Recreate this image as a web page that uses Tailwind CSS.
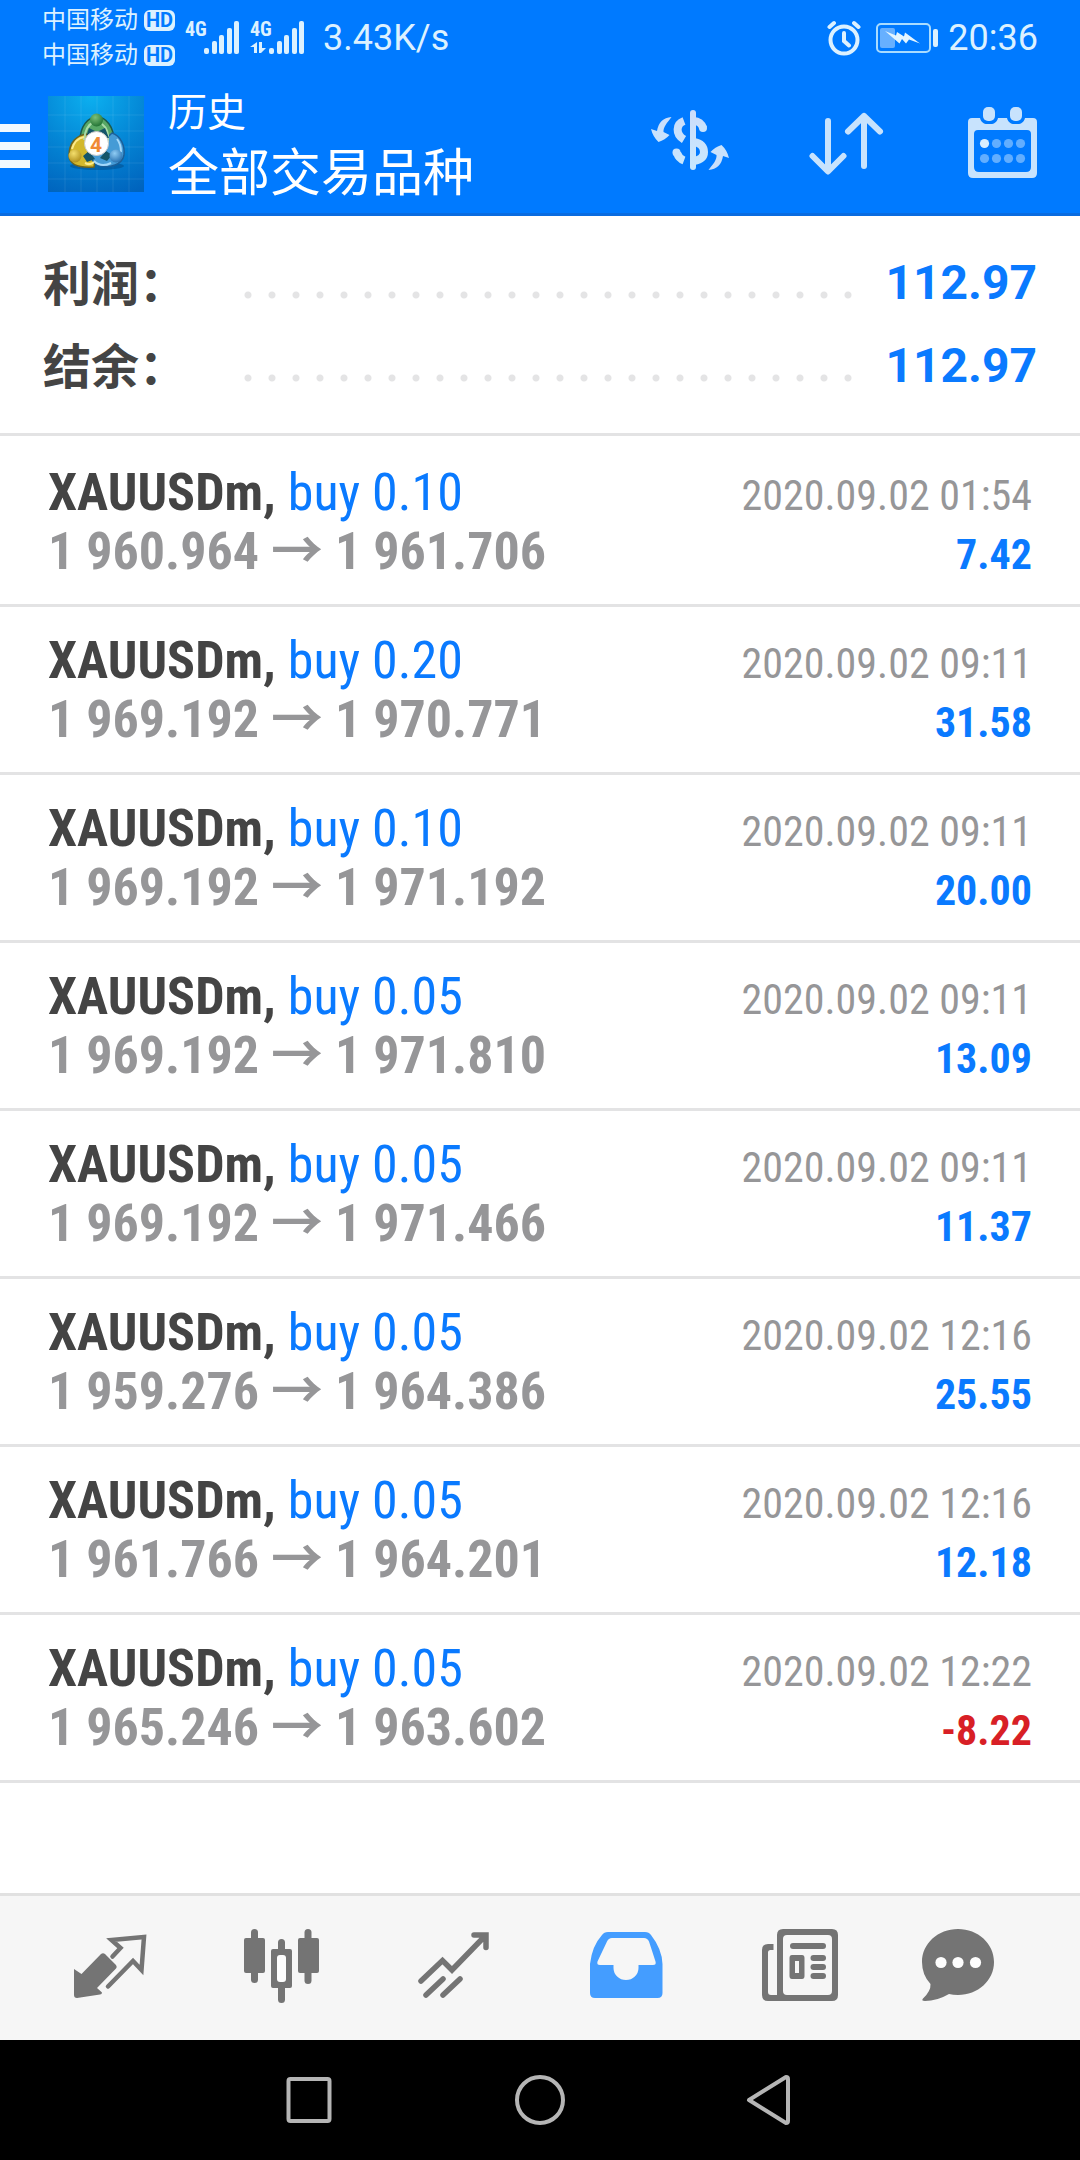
<!DOCTYPE html>
<html lang="zh-CN">
<head>
<meta charset="utf-8">
<meta name="viewport" content="width=device-width, initial-scale=1">
<title>历史</title>
<script src="https://cdn.jsdelivr.net/npm/@tailwindcss/browser@4"></script>
</head>
<body class="flex min-h-screen flex-col bg-white font-['Roboto','Noto_Sans_CJK_SC',sans-serif] text-[#444]">

<header class="bg-[#007aff] text-white border-b-3 border-[#0a6ce0]">
  <!-- status bar -->
  <div class="flex h-[75px] items-center pl-[42px] pr-[42px] text-[#dcf1ff]">
    <div class="flex flex-col text-2xl leading-[35px]">
      <div class="flex items-center gap-[6px]">中国移动
        <span class="flex h-[21px] w-[31px] items-center justify-center rounded-md bg-[#dcf1ff] text-xl leading-none font-bold text-[#007aff]">HD</span>
      </div>
      <div class="flex items-center gap-[6px]">中国移动
        <span class="flex h-[21px] w-[31px] items-center justify-center rounded-md bg-[#dcf1ff] text-xl leading-none font-bold text-[#007aff]">HD</span>
      </div>
    </div>
    <svg class="ml-[10px] h-12 w-[120px]" viewBox="0 -5 120 48" fill="#dcf1ff">
      <text x="0" y="17" font-family="Roboto Condensed" font-weight="700" font-size="20">4G</text>
      <g id="bars"><rect x="19" y="29" width="5" height="6" rx="2"/><rect x="27" y="22" width="5" height="13" rx="2"/><rect x="34" y="16" width="5" height="19" rx="2"/><rect x="42" y="9" width="5" height="26" rx="2"/><rect x="49" y="2" width="5" height="33" rx="2"/></g>
      <text x="65" y="17" font-family="Roboto Condensed" font-weight="700" font-size="20">4G</text>
      <path d="M72 23v11h-3v-6h-4zM74 23h3v6h4l-5 5h-2z"/>
      <use href="#bars" x="65"/>
    </svg>
    <span class="ml-[18px] text-4xl leading-[50px]">3.43K/s</span>
    <svg class="ml-auto h-[36px] w-[34px]" viewBox="0 0 34 36" fill="none" stroke="#dcf1ff" stroke-width="4" stroke-linecap="round">
      <circle cx="17" cy="20" r="13.5"/><path d="M17 13v8l5 4.500M2.500 7l4.500-4M31.500 7l-4.500-4"/>
    </svg>
    <svg class="ml-[14px] h-[30px] w-[64px]" viewBox="0 0 64 30">
      <rect x="2" y="1" width="53" height="28" rx="4" fill="none" stroke="#a9dcff" stroke-width="2"/>
      <rect x="5" y="5" width="15" height="20" rx="2" fill="#67b0ff"/>
      <path d="M10 8L21 12.500 22 9 29 13.500 30 9.500 45 20.500 34 16.500 31 20.500 27 16 24.500 20.500z" fill="#e4f5ff"/>
      <rect x="58" y="6" width="5" height="18" rx="2" fill="#dcf1ff"/>
    </svg>
    <span class="ml-[9px] text-4xl leading-[50px]">20:36</span>
  </div>

  <!-- app bar -->
  <div class="flex h-[138px] items-center">
    <button type="button" aria-label="菜单" class="mr-[18px] flex w-[30px] flex-col gap-[10px] pt-1">
      <span class="h-2 bg-[#f2f9ff]"></span><span class="h-2 bg-[#f2f9ff]"></span><span class="h-2 bg-[#f2f9ff]"></span>
    </button>
    <svg class="size-24 shrink-0" viewBox="0 0 96 96">
      <defs>
        <radialGradient id="sky" cx=".45" cy="0" r="1.100"><stop offset="0" stop-color="#0cb0f0"/><stop offset=".5" stop-color="#0487d6"/><stop offset="1" stop-color="#0063bd"/></radialGradient>
        <radialGradient id="gr" cx=".4" cy=".3" r=".8"><stop offset="0" stop-color="#7cc078"/><stop offset="1" stop-color="#17692c"/></radialGradient>
        <radialGradient id="ye" cx=".4" cy=".3" r=".8"><stop offset="0" stop-color="#f3de6c"/><stop offset="1" stop-color="#a88612"/></radialGradient>
        <radialGradient id="bl" cx=".4" cy=".3" r=".8"><stop offset="0" stop-color="#8fccf4"/><stop offset="1" stop-color="#1c66a8"/></radialGradient>
      </defs>
      <rect width="96" height="96" fill="url(#sky)"/>
      <path d="M17 0v96M33 0v96M49 0v96M65 0v96M81 0v96M0 19h96M0 35h96M0 51h96M0 67h96M0 83h96" stroke="#fff" stroke-opacity=".09"/>
      <ellipse cx="49" cy="70" rx="27" ry="4" fill="#024a86" opacity=".5"/>
      <g stroke="#1d5a4a" stroke-width="1.500">
        <path d="M32 45c0-15 8-24 17-24s17 10 17 24l-8 7H40z" fill="#58a866"/>
        <path d="M21 60c0-14 8-21 18-22l9 22-2 11c-14 1-24-1-25-11z" fill="#d3b82c" stroke="#6d6420"/>
        <path d="M64 37c9 3 13 13 12 22-2 10-14 13-24 11-5-1-9-6-10-12z" fill="#459bd6" stroke="#1c5f99"/>
      </g>
      <path d="M36 44c1-10 5-16 10-18M60 46c1-9-2-15-6-18" stroke="#a9dba9" stroke-width="2" fill="none"/>
      <path d="M24 53c2-7 6-11 12-12M37 67c4 2 7 1 9-1" stroke="#fbea8c" stroke-width="2" fill="none"/>
      <path d="M69 43c4 5 4 9 4 13M46 65c5 5 11 5 17 2" stroke="#a4d8fa" stroke-width="2" fill="none"/>
      <path d="M41 32l8 4 8-4 4 10H38zM35 60l6-5 6 8-8 3zM52 62l6-7 6 4-5 6z" fill="#14556a"/>
      <circle cx="48.500" cy="24" r="6.500" fill="url(#gr)"/>
      <circle cx="27" cy="60" r="6.500" fill="url(#ye)"/>
      <circle cx="68" cy="60" r="6.500" fill="url(#bl)"/>
      <circle cx="48.500" cy="47.500" r="12" fill="#fff" stroke="#c9c9c9"/>
      <text x="48" y="55.500" text-anchor="middle" font-family="Roboto" font-weight="700" font-size="21" fill="#f08a35">4</text>
    </svg>
    <div class="ml-6 mr-auto pt-2">
      <div class="text-[39px] leading-[52px]">历史</div>
      <h1 class="text-[51px] leading-[70px]">全部交易品种</h1>
    </div>
    <button type="button" aria-label="品种" class="flex w-[156px] justify-center">
      <svg class="h-[76px] w-[84px]" viewBox="0 0 84 76">
        <defs><linearGradient id="ice" gradientUnits="userSpaceOnUse" x1="0" y1="0" x2="0" y2="76"><stop offset="0" stop-color="#ccdcfa"/><stop offset="1" stop-color="#c6ebff"/></linearGradient></defs>
        <g fill="none" stroke="url(#ice)" stroke-width="8">
          <path d="M36 15C28 18 27 28 36 33.500"/>
          <path d="M29 47c1 3 3 6 7 7.500"/><circle cx="28.500" cy="46.500" r="4" stroke="none" fill="#c8e3fd"/>
          <path d="M46 15c4 0 8 3 9 7"/><circle cx="55" cy="22" r="4" stroke="none" fill="#c8e3fd"/>
          <path d="M46 36c7 1 10 5 10 10s-4 8-10 9"/>
        </g>
        <rect x="42" y="4" width="6" height="60" rx="3" fill="url(#ice)"/>
        <path id="turn" d="M23.500 11C19 17 15 21 15.500 26L21.500 29Q17 34 10.500 36Q5 31 3 23L9 25Q11 12 23.500 11z" fill="url(#ice)"/>
        <use href="#turn" transform="rotate(180 42 37.500)"/>
      </svg>
    </button>
    <button type="button" aria-label="排序" class="flex w-[156px] justify-center">
      <svg class="h-[68px] w-[76px]" viewBox="0 0 76 68" fill="none" stroke="#c8e3fd" stroke-width="6" stroke-linecap="round" stroke-linejoin="round">
        <path d="M20 11v50M4.500 46L20 61.500 35.500 46M56 56V6M40 21.500L56 6l16 15.500"/>
      </svg>
    </button>
    <button type="button" aria-label="日期" class="flex w-[156px] justify-center">
      <svg class="h-[74px] w-[69px]" viewBox="0 0 69 74" fill="#c8e3fd">
        <path fill-rule="evenodd" d="M4 11H12C13 15 16 17 19 17H23C26 17 29 15 30 11H39C40 15 43 17 46 17H50C53 17 56 15 57 11H65Q69 11 69 15V66Q69 71 64 71H5Q0 71 0 66V15Q0 11 4 11zM10 23Q6 23 6 27V60Q6 65 11 65H58Q63 65 63 60V27Q63 23 59 23z"/>
        <rect x="15" y="0" width="12" height="14" rx="5"/><rect x="42" y="0" width="12" height="14" rx="5"/>
        <circle cx="16.500" cy="36.500" r="4.600" fill="#d8eeff"/>
        <g fill="#62aeff"><circle cx="28.500" cy="36.500" r="4.600"/><circle cx="40.500" cy="36.500" r="4.600"/><circle cx="52.500" cy="36.500" r="4.600"/><circle cx="16.500" cy="51.500" r="4.600"/><circle cx="28.500" cy="51.500" r="4.600"/><circle cx="40.500" cy="51.500" r="4.600"/><circle cx="52.500" cy="51.500" r="4.600"/></g>
      </svg>
    </button>
  </div>
</header>

<main class="flex-1">
  <dl class="border-b-3 border-[#e3e3e4] px-[43px] pt-[25px] pb-[26px] text-5xl leading-[83px] font-bold">
    <div class="flex items-center">
      <dt class="w-[193px] pt-1 leading-[79px]">利润：</dt>
      <dd class="flex flex-1 items-center text-[#0a7aff]">
        <span class="mt-6 mr-[25px] h-2 flex-1 bg-[radial-gradient(circle,#e4e4e5_3px,transparent_4px)] bg-size-[24px_8px]"></span>112.97</dd>
    </div>
    <div class="flex items-center">
      <dt class="w-[193px] pt-1 leading-[79px]">结余：</dt>
      <dd class="flex flex-1 items-center text-[#0a7aff]">
        <span class="mt-6 mr-[25px] h-2 flex-1 bg-[radial-gradient(circle,#e4e4e5_3px,transparent_4px)] bg-size-[24px_8px]"></span>112.97</dd>
    </div>
  </dl>

  <ul class="pt-[3px] font-['Roboto_Condensed','Noto_Sans_CJK_SC',sans-serif] text-[52px] leading-[59px]">
    <li class="border-b-3 border-[#e3e3e4] px-12 pt-6 pb-[23px]">
      <div class="flex items-baseline justify-between"><div><b>XAUUSDm,</b> <span class="text-[#0a7aff]">buy 0.10</span></div><time class="text-[42px] leading-[50px] text-[#969698]">2020.09.02 01:54</time></div>
      <div class="flex items-baseline justify-between font-bold"><div class="text-[#969698]">1 960.964 → 1 961.706</div><div class="text-[42px] leading-[50px] text-[#0a7aff]">7.42</div></div>
    </li>
    <li class="border-b-3 border-[#e3e3e4] px-12 pt-6 pb-[23px]">
      <div class="flex items-baseline justify-between"><div><b>XAUUSDm,</b> <span class="text-[#0a7aff]">buy 0.20</span></div><time class="text-[42px] leading-[50px] text-[#969698]">2020.09.02 09:11</time></div>
      <div class="flex items-baseline justify-between font-bold"><div class="text-[#969698]">1 969.192 → 1 970.771</div><div class="text-[42px] leading-[50px] text-[#0a7aff]">31.58</div></div>
    </li>
    <li class="border-b-3 border-[#e3e3e4] px-12 pt-6 pb-[23px]">
      <div class="flex items-baseline justify-between"><div><b>XAUUSDm,</b> <span class="text-[#0a7aff]">buy 0.10</span></div><time class="text-[42px] leading-[50px] text-[#969698]">2020.09.02 09:11</time></div>
      <div class="flex items-baseline justify-between font-bold"><div class="text-[#969698]">1 969.192 → 1 971.192</div><div class="text-[42px] leading-[50px] text-[#0a7aff]">20.00</div></div>
    </li>
    <li class="border-b-3 border-[#e3e3e4] px-12 pt-6 pb-[23px]">
      <div class="flex items-baseline justify-between"><div><b>XAUUSDm,</b> <span class="text-[#0a7aff]">buy 0.05</span></div><time class="text-[42px] leading-[50px] text-[#969698]">2020.09.02 09:11</time></div>
      <div class="flex items-baseline justify-between font-bold"><div class="text-[#969698]">1 969.192 → 1 971.810</div><div class="text-[42px] leading-[50px] text-[#0a7aff]">13.09</div></div>
    </li>
    <li class="border-b-3 border-[#e3e3e4] px-12 pt-6 pb-[23px]">
      <div class="flex items-baseline justify-between"><div><b>XAUUSDm,</b> <span class="text-[#0a7aff]">buy 0.05</span></div><time class="text-[42px] leading-[50px] text-[#969698]">2020.09.02 09:11</time></div>
      <div class="flex items-baseline justify-between font-bold"><div class="text-[#969698]">1 969.192 → 1 971.466</div><div class="text-[42px] leading-[50px] text-[#0a7aff]">11.37</div></div>
    </li>
    <li class="border-b-3 border-[#e3e3e4] px-12 pt-6 pb-[23px]">
      <div class="flex items-baseline justify-between"><div><b>XAUUSDm,</b> <span class="text-[#0a7aff]">buy 0.05</span></div><time class="text-[42px] leading-[50px] text-[#969698]">2020.09.02 12:16</time></div>
      <div class="flex items-baseline justify-between font-bold"><div class="text-[#969698]">1 959.276 → 1 964.386</div><div class="text-[42px] leading-[50px] text-[#0a7aff]">25.55</div></div>
    </li>
    <li class="border-b-3 border-[#e3e3e4] px-12 pt-6 pb-[23px]">
      <div class="flex items-baseline justify-between"><div><b>XAUUSDm,</b> <span class="text-[#0a7aff]">buy 0.05</span></div><time class="text-[42px] leading-[50px] text-[#969698]">2020.09.02 12:16</time></div>
      <div class="flex items-baseline justify-between font-bold"><div class="text-[#969698]">1 961.766 → 1 964.201</div><div class="text-[42px] leading-[50px] text-[#0a7aff]">12.18</div></div>
    </li>
    <li class="border-b-3 border-[#e3e3e4] px-12 pt-6 pb-[23px]">
      <div class="flex items-baseline justify-between"><div><b>XAUUSDm,</b> <span class="text-[#0a7aff]">buy 0.05</span></div><time class="text-[42px] leading-[50px] text-[#969698]">2020.09.02 12:22</time></div>
      <div class="flex items-baseline justify-between font-bold"><div class="text-[#969698]">1 965.246 → 1 963.602</div><div class="text-[42px] leading-[50px] text-[#d81f26]">-8.22</div></div>
    </li>
  </ul>
</main>

<!-- tab bar -->
<nav class="grid h-[147px] grid-cols-[repeat(5,172fr)_148fr] items-center justify-items-center border-t-3 border-[#e1e1e1] bg-[#f6f6f6] pl-6 pr-12 text-[#747474]">
  <button type="button" aria-label="报价"><svg class="size-20" viewBox="0 0 80 80"><g transform="translate(4 7)">
    <path d="M0 34l7.500 5L27 19q2-1.500 4 0l11 11q1.500 2 0 3.500L23 53l5 4.500q0 2-2 2L3 63Q0 63 0 60z" fill="currentColor"/>
    <path d="M38.500 21.500l8-8.500-9-8L70 2 67.500 35 59 26 34 51.500" fill="none" stroke="currentColor" stroke-width="4.500" stroke-linecap="round"/>
  </g></svg></button>
  <button type="button" aria-label="图表"><svg class="size-20" viewBox="0 0 80 80"><g transform="translate(2 1)" fill="currentColor">
    <rect x="7" y="0" width="7" height="54" rx="3.500"/><rect x="0" y="9" width="21" height="35" rx="2"/>
    <rect x="60.500" y="0" width="7" height="55" rx="3.500"/><rect x="54" y="9" width="21" height="35" rx="2"/>
    <path d="M34 20V13.500q0-3.500 3.500-3.500t3.500 3.500V20h5q2 0 2 2v35q0 2-2 2h-5v11.500q0 3.500-3.500 3.500T34 70.500V59h-5q-2 0-2-2V22q0-2 2-2z"/><rect x="33" y="26" width="9" height="27" rx="3" fill="#fdfdfd"/>
  </g></svg></button>
  <button type="button" aria-label="交易"><svg class="size-20" viewBox="0 0 80 80"><g transform="translate(4 4)" fill="none" stroke="currentColor" stroke-width="5.500" stroke-linecap="round">
    <path d="M3 49L24.500 28.500 34 38 67 4M56 3h12v12.500M8 63l17-16M25 63l17-16"/>
  </g></svg></button>
  <button type="button" aria-label="历史" class="text-[#449dff]"><svg class="size-20" viewBox="0 0 80 80"><g transform="translate(4 4)">
    <path fill="currentColor" fill-rule="evenodd" d="M18 0H55q4 0 6 3Q72 17 72.500 32V61q0 5-5 5H5q-5 0-5-5V32Q2 14 12 3q2-3 6-3zM17 9.500L7.500 29.500q-1 3.500 2.500 3.500H23.500v3a12.500 12 0 0 0 25 0v-3H63q3.500 0 2.500-3.500L59 9.500q-1.500-3.500-5-3.500H22q-3.500 0-5 3.500z"/>
  </g></svg></button>
  <button type="button" aria-label="新闻"><svg class="size-20" viewBox="0 0 80 80"><g transform="translate(4 1)" fill="currentColor">
    <path fill-rule="evenodd" d="M15 72H6Q0 72 0 66V21Q0 15 6 15h5.500v6H8.500Q6 21 6 23.500V63q0 3 3 3h6V6q0-6 6-6H70q6 0 6 6V66q0 6-6 6zM25 6q-4 0-4 4V62q0 4 4 4H66q4 0 4-4V10q0-4-4-4z"/>
    <rect x="28" y="14" width="36" height="6" rx="3"/>
    <path fill-rule="evenodd" d="M30 26H40q2.500 0 2.500 3V47q0 3-2.500 3H30q-2.500 0-2.500-3V29q0-3 2.500-3zM33 32V44h4V32z"/>
    <rect x="48.500" y="26" width="15.500" height="6" rx="3"/><rect x="48.500" y="35" width="15.500" height="6" rx="3"/><rect x="48.500" y="44" width="15.500" height="6" rx="3"/>
  </g></svg></button>
  <button type="button" aria-label="聊天"><svg class="size-20" viewBox="0 0 80 80"><g transform="translate(4 1)">
    <path d="M36 0C56 0 72 14.500 72 33S56 66 36 66Q31 66 27 65Q15 72 3 72Q-1 72 1 69.500Q9 62 8.500 55Q0 46 0 33C0 14.500 16 0 36 0z" fill="currentColor"/>
    <g fill="#fdfdfd"><circle cx="19" cy="33.500" r="5.600"/><circle cx="36" cy="33.500" r="5.600"/><circle cx="53.500" cy="33.500" r="5.600"/></g>
  </g></svg></button>
</nav>

<!-- system navigation -->
<div class="flex h-[120px] items-center justify-center gap-[175px] bg-black">
  <button type="button" aria-label="最近任务"><svg class="size-14" viewBox="0 0 56 56" fill="none" stroke="#b5b5b5" stroke-width="4"><rect x="7.500" y="7" width="41" height="42" rx="2"/></svg></button>
  <button type="button" aria-label="主屏幕"><svg class="size-14" viewBox="0 0 56 56" fill="none" stroke="#b5b5b5" stroke-width="4"><circle cx="28" cy="28" r="23"/></svg></button>
  <button type="button" aria-label="返回"><svg class="size-14" viewBox="0 0 56 56" fill="none" stroke="#b5b5b5" stroke-width="4" stroke-linejoin="round"><path d="M6 28L43 5q2 0 2 2V49q0 2-2 2z"/></svg></button>
</div>
</body>
</html>
